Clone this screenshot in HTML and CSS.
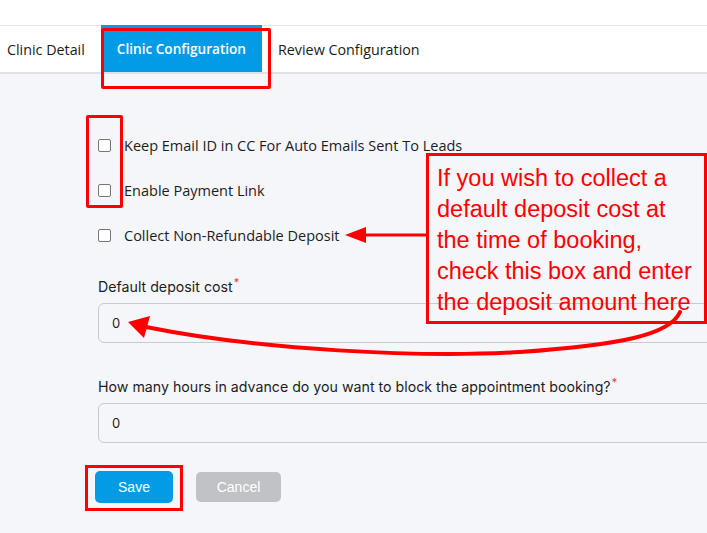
FILE: index.html
```html
<!DOCTYPE html>
<html>
<head>
<meta charset="utf-8">
<link rel="stylesheet" href="styles.css">
</head>
<body>
<div class="page">
  <div class="topbar"></div>
  <nav class="tabs">
    <div class="tab first">Clinic Detail</div>
    <div class="tab active">Clinic Configuration</div>
    <div class="tab">Review Configuration</div>
  </nav>
  <main class="content">
    <div class="checks">
      <label class="check"><span class="box"></span><span>Keep Email ID in CC For Auto Emails Sent To Leads</span></label>
      <label class="check"><span class="box"></span><span>Enable Payment Link</span></label>
      <label class="check"><span class="box"></span><span>Collect Non-Refundable Deposit</span></label>
    </div>
    <div class="field">
      <div class="flabel">Default deposit cost<sup>*</sup></div>
      <div class="input">0</div>
    </div>
    <div class="field second">
      <div class="flabel">How many hours in advance do you want to block the appointment booking?<sup>*</sup></div>
      <div class="input">0</div>
    </div>
    <div class="buttons">
      <button class="btn save">Save</button>
      <button class="btn cancel">Cancel</button>
    </div>
  </main>

  <div class="hl hl-tab"></div>
  <div class="hl hl-checks"></div>
  <div class="hl hl-save"></div>
  <div class="note">If you wish to collect a<br>default deposit cost at<br>the time of booking,<br>check this box and enter<br>the deposit amount here</div>
  <svg class="arrows" width="707" height="533" viewBox="0 0 707 533">
    <line x1="428" y1="235" x2="360" y2="235" stroke="#ff0000" stroke-width="3"/>
    <polygon points="345,235 366,227 366,243" fill="#ff0000"/>
    <path d="M680 312 C 670 335, 620 345, 520 352 C 420 358, 260 350, 146 327" fill="none" stroke="#ff0000" stroke-width="4" stroke-linecap="round"/>
    <polygon points="128,322 150,316 144,338" fill="#ff0000"/>
  </svg>
</div>
</body>
</html>
```
FILE: styles.css
```css
* { box-sizing: border-box; }
html, body { margin: 0; padding: 0; }
body {
  width: 707px;
  height: 533px;
  overflow: hidden;
  font-family: "Open Sans", "Noto Sans", sans-serif;
  color: #1d1d1f;
  background: #f5f6fa;
}
.page { position: relative; width: 707px; height: 533px; overflow: hidden; }
.topbar { height: 26px; background: #fff; border-bottom: 1px solid #e3e4e8; }
.tabs {
  display: flex;
  height: 48px;
  background: #fff;
  border-bottom: 2px solid #e1e2e6;
  font-size: 14.3px;
}
.tab { display: flex; align-items: center; padding: 0 16px; color: #1b1b1b; }
.tab.first { padding-left: 7px; }
.tab.active { background: #039be5; color: #fff; font-weight: 600; font-size: 13.6px; margin-top: -1px; }
.content { padding: 62px 0 0 98px; }
.checks { display: flex; flex-direction: column; gap: 26px; }
.check { display: flex; align-items: center; gap: 13px; font-size: 14.5px; height: 19px; }
.box {
  width: 13px; height: 13px;
  border: 1px solid #767676;
  border-radius: 2px;
  background: #fff;
  flex: none;
}
.field { margin-top: 33px; }
.field.second { margin-top: 35px; }
.flabel { font-family: "Inter", "Roboto", sans-serif; font-size: 14.2px; color: #1d1d1f; height: 20px; }
.flabel sup { color: #e53935; font-size: 11px; vertical-align: 6px; line-height: 0; margin-left: 1px; }
.input {
  margin-top: 5px;
  width: 640px;
  height: 40px;
  border: 1px solid #c9cacd;
  border-radius: 6px;
  display: flex;
  align-items: center;
  padding-left: 13px;
  font-family: "Inter", "Roboto", sans-serif;
  font-size: 13px;
  color: #1d1d1f;
}
.buttons { display: flex; gap: 23px; margin-top: 28px; margin-left: -3px; }
.btn {
  border: 0;
  border-radius: 5px;
  color: #fff;
  font-family: "Liberation Sans", Arial, sans-serif;
  font-size: 14px;
}
.save { background: #039be5; width: 78px; height: 32px; }
.cancel { background: #c0c2c6; width: 85px; height: 30px; margin-top: 1px; }

.hl { position: absolute; border: 3px solid #ff0000; }
.hl-tab { left: 101px; top: 28px; width: 170px; height: 61px; border-radius: 2px; }
.hl-checks { left: 86px; top: 115px; width: 37px; height: 93px; border-radius: 2px; }
.hl-save { left: 85px; top: 465px; width: 98px; height: 46px; }
.note {
  position: absolute;
  left: 426px;
  top: 153px;
  width: 281px;
  height: 171px;
  border: 3px solid #ff0000;
  padding: 7px 0 0 8px;
  font-family: "Liberation Sans", Arial, sans-serif;
  font-size: 23.5px;
  line-height: 31px;
  color: #ff0000;
  white-space: nowrap;
  overflow: hidden;
}
.arrows { position: absolute; left: 0; top: 0; pointer-events: none; }
```
